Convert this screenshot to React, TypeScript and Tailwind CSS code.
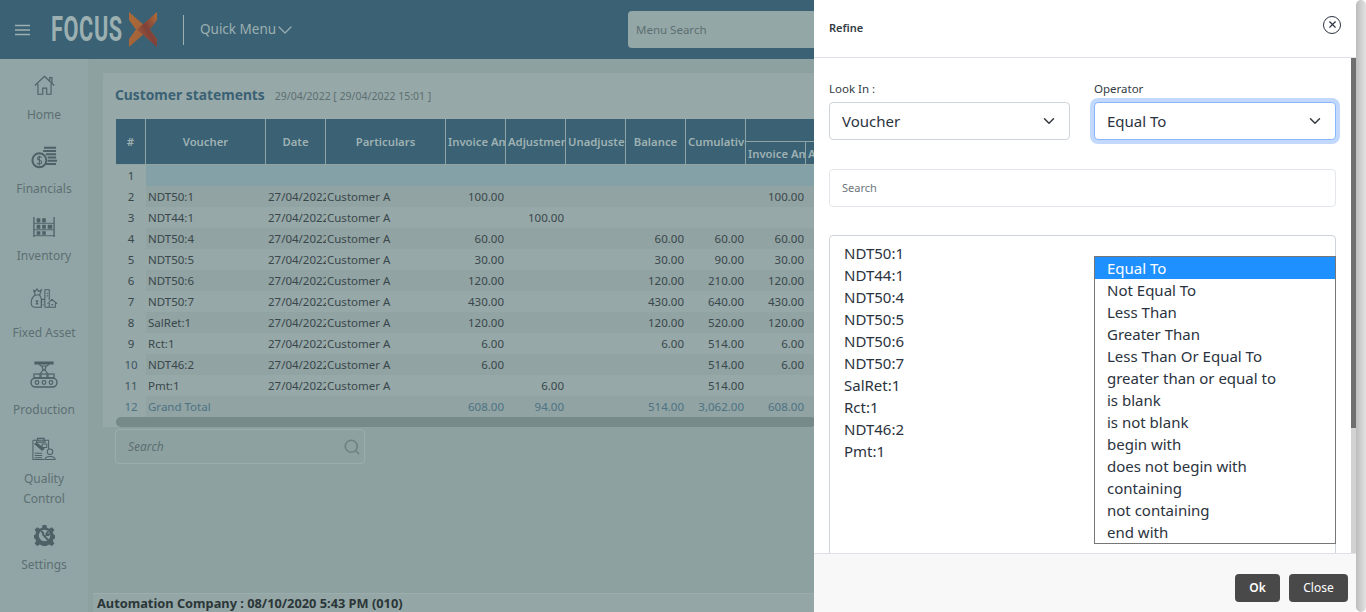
import React from "react";
import { ChevronDown, X, Search } from "lucide-react";

const stroke = "#4d6267";

const HomeIcon = () => (
  <svg width="23" height="21" viewBox="0 0 24 24" fill="none" stroke={stroke} strokeWidth="1.300">
    <path d="M1 12 L12 1.500 L23 12 M18 7 V3 h2.500 V9.500 M4.500 10 V22 H10 V15 H14.500 V22 H19.500 V10" />
  </svg>
);
const CoinsIcon = () => (
  <svg width="26" height="23" viewBox="0 0 28 24" fill="none">
    <circle cx="9" cy="15" r="7.500" stroke={stroke} strokeWidth="2.200" />
    <path d="M11.500 12 C10 10.500 6.500 11 7 13.500 C7.500 15.500 11.500 14.500 11.500 17 C11.500 19 8 19.500 6.500 18 M9 10 V20.500" stroke={stroke} strokeWidth="1.200" />
    <path d="M14 1.500 h13 M13 5 h14 M16 8.500 h11 M18 12 h9 M18 15.500 h10 M16 19 h11" stroke={stroke} strokeWidth="2.400" />
  </svg>
);
const ShelfIcon = () => (
  <svg width="22" height="22" viewBox="0 0 24 24" fill="none">
    <path d="M1 1 V23 M23 1 V23" stroke={stroke} strokeWidth="1.400" />
    <path d="M1 8 H23 M1 15 H23 M1 21.500 H23" stroke={stroke} strokeWidth="1" />
    <path d="M4 2.500 h4 v4.500 h-4z M10 2.500 h4 v4.500 h-4z M4 9.500 h4 v4.500 h-4z M10 9.500 h4 v4.500 h-4z M16 9.500 h5 v4.500 h-5z M4 16.500 h4 v4 h-4z M10 16.500 h4 v4 h-4z" fill={stroke} />
  </svg>
);
const AssetIcon = () => (
  <svg width="30" height="21" viewBox="0 0 30 24" fill="none" stroke={stroke} strokeWidth="1.200">
    <path d="M3 2 L5 4 L7 1 L9 4 L12 2 L10 8 H5 Z" />
    <path d="M5 8 C-1 12 -1 22 4 22 H12 V12 L10 8" />
    <path d="M7 14 v5 M5.500 15 h3 M5.500 18 h3" />
    <path d="M12 22 V13 H16 V22 M16 22 V2 H21 V14 M18 6 h1.500 M18 9 h1.500 M13.500 16 h1 M13.500 19 h1" />
    <path d="M19 18 L24 13 L30 18 M21 17 V22 H28 V17 M16 22 H28 M23.500 19 h2" />
  </svg>
);
const ProductionIcon = () => (
  <svg width="28" height="27" viewBox="0 0 28 27" fill="none" stroke={stroke} strokeWidth="1.200">
    <path d="M5 1 H23 V3 H5 Z" fill={stroke} />
    <path d="M9 3 L11 5 H17 L19 3 M12 5 L13 9 H15 L16 5" />
    <path d="M10 13 L13 9 H15 L18 13" />
    <rect x="4" y="13" width="6" height="4" /><rect x="11" y="13" width="6" height="4" /><rect x="18" y="13" width="6" height="4" />
    <rect x="1" y="17" width="26" height="9" rx="4.500" strokeWidth="1.400" />
    <circle cx="7" cy="21.500" r="1.800" /><circle cx="14" cy="21.500" r="1.800" /><circle cx="21" cy="21.500" r="1.800" />
  </svg>
);
const QualityIcon = () => (
  <svg width="24" height="24" viewBox="0 0 26 25" fill="none" stroke={stroke} strokeWidth="1.100">
    <path d="M1 3 H18 V13 M13 24 H1 V3" />
    <path d="M6 3 V1 H13 V3 M5 3 V5 H14 V3" strokeWidth="1.400" />
    <path d="M3 7 L11 14 L13 12 L5 6 Z" fill={stroke} />
    <path d="M11 7 H16 V11 H11 Z" />
    <path d="M3 17 H11 M3 19.500 H11 M3 22 H11" />
    <circle cx="19.500" cy="15.500" r="3" />
    <path d="M14 24 C14 19.500 25 19.500 25 24 Z" />
  </svg>
);
const GearIcon = () => (
  <svg width="21" height="21" viewBox="0 0 22 22">
    <path fillRule="evenodd" fill={stroke} d="M9 0 h4 l.6 3 2.400 1 2.600-1.700 2.800 2.800-1.700 2.600 1 2.400 3 .6 v3 l-3 .6-1 2.400 1.700 2.600-2.800 2.800-2.600-1.700-2.400 1-.6 2.800 h-4 l-.6-2.800-2.400-1-2.600 1.700-2.800-2.800 1.700-2.600-1-2.400-2.900-.6 v-3 l2.900-.6 1-2.400-1.700-2.600 2.800-2.800 2.600 1.700 2.400-1z M11 5 a6 6 0 1 0 .01 0z" />
    <path d="M7.500 6.500 L9.500 8 V10 L15 16 M15 7 L13 9 V10.500 H15 L16.500 9" stroke={stroke} strokeWidth="2" fill="none" />
  </svg>
);

const nav: { label: string[]; icon: React.ReactNode; h: string; gap: string }[] = [
  { label: ["Home"], icon: <HomeIcon />, h: "h-[72px]", gap: "mt-[6px]" },
  { label: ["Financials"], icon: <CoinsIcon />, h: "h-[69px]", gap: "mt-[8px]" },
  { label: ["Inventory"], icon: <ShelfIcon />, h: "h-[72px]", gap: "mt-[6px]" },
  { label: ["Fixed Asset"], icon: <AssetIcon />, h: "h-[76px]", gap: "mt-[11px]" },
  { label: ["Production"], icon: <ProductionIcon />, h: "h-[74px]", gap: "mt-[12px]" },
  { label: ["Quality", "Control"], icon: <QualityIcon />, h: "h-[87px]", gap: "mt-[7px]" },
  { label: ["Settings"], icon: <GearIcon />, h: "h-[60px]", gap: "mt-[6px]" },
];

const rows: (string | number)[][] = [
  [1, "", "", "", "", "", "", "", "", "", ""],
  [2, "NDT50:1", "27/04/2022", "Customer A", "100.00", "", "", "", "", "100.00"],
  [3, "NDT44:1", "27/04/2022", "Customer A", "", "100.00", "", "", "", ""],
  [4, "NDT50:4", "27/04/2022", "Customer A", "60.00", "", "", "60.00", "60.00", "60.00"],
  [5, "NDT50:5", "27/04/2022", "Customer A", "30.00", "", "", "30.00", "90.00", "30.00"],
  [6, "NDT50:6", "27/04/2022", "Customer A", "120.00", "", "", "120.00", "210.00", "120.00"],
  [7, "NDT50:7", "27/04/2022", "Customer A", "430.00", "", "", "430.00", "640.00", "430.00"],
  [8, "SalRet:1", "27/04/2022", "Customer A", "120.00", "", "", "120.00", "520.00", "120.00"],
  [9, "Rct:1", "27/04/2022", "Customer A", "6.00", "", "", "6.00", "514.00", "6.00"],
  [10, "NDT46:2", "27/04/2022", "Customer A", "6.00", "", "", "", "514.00", "6.00"],
  [11, "Pmt:1", "27/04/2022", "Customer A", "", "6.00", "", "", "514.00", ""],
  [12, "Grand Total", "", "", "608.00", "94.00", "", "514.00", "3,062.00", "608.00"],
];

const widths = [30, 120, 60, 120, 60, 60, 60, 60, 60, 60, 60];
const thc = "border-r border-b border-[#91a4a4] px-[2px] pt-[2px] overflow-hidden whitespace-nowrap text-center font-semibold text-[11.3px] text-[#9fb2b3]";

const voucherList = ["NDT50:1", "NDT44:1", "NDT50:4", "NDT50:5", "NDT50:6", "NDT50:7", "SalRet:1", "Rct:1", "NDT46:2", "Pmt:1"];
const operators = ["Equal To", "Not Equal To", "Less Than", "Greater Than", "Less Than Or Equal To", "greater than or equal to", "is blank", "is not blank", "begin with", "does not begin with", "containing", "not containing", "end with"];

const Select = ({ value, focus }: { value: string; focus?: boolean }) => (
  <div className={"h-[38px] rounded-[4px] border flex items-center justify-between pl-[12px] pr-[11px] bg-white text-[15px] text-[#2b3340] " + (focus ? "border-[#86b7fe] shadow-[0_0_0_4px_#c2d9fd]" : "border-[#ced4da]")}>
    <span className="pt-[1px]">{value}</span>
    <ChevronDown size={18} strokeWidth={2} className="text-[#343a40]" />
  </div>
);

export default function App() {
  return (
    <div className="relative w-[1366px] h-[612px] overflow-hidden flex flex-col bg-[#8ea1a1] font-['Noto_Sans','Open_Sans',sans-serif]">
      <header className="h-[59px] shrink-0 bg-[#3a6174] flex items-center text-[#9db0b1]">
        <svg width="16" height="12" viewBox="0 0 16 12" className="ml-[15px]" stroke="#9db0b1" strokeWidth="1.600">
          <path d="M0 1.500 H15 M0 6 H15 M0 10.500 H15" />
        </svg>
        <div className="ml-[20px] w-[71px] h-[30px] overflow-visible">
          <span className="block origin-top-left scale-x-[0.62] font-['Roboto',sans-serif] font-bold text-[35px] leading-[30px] tracking-[1px] text-[#9db0b1] whitespace-nowrap">FOCUS</span>
        </div>
        <svg width="28" height="35" viewBox="0 0 28 35" className="ml-[7px]">
          <defs>
            <linearGradient id="xa" x1="0" y1="0" x2="1" y2="1"><stop offset="0" stopColor="#aa6a38" /><stop offset="1" stopColor="#a0603a" /></linearGradient>
            <linearGradient id="xb" x1="1" y1="0" x2="0" y2="1"><stop offset="0" stopColor="#b06f38" /><stop offset="0.5" stopColor="#7f403a" /><stop offset="1" stopColor="#ad6d38" /></linearGradient>
          </defs>
          <polygon points="0,0 20,17.500 0,35 0,27 7,17.500 0,8" fill="url(#xa)" />
          <polygon points="28,0 8,17.500 28,35 28,27 21,17.500 28,8" fill="url(#xb)" />
        </svg>
        <div className="ml-[26px] w-px h-[30px] bg-[#9db0b1]" />
        <span className="ml-[16px] mb-[1px] w-[75px] whitespace-nowrap text-[13.5px] text-[#9db0b1]">Quick Menu</span>
        <ChevronDown size={24} strokeWidth={1.2} className="-ml-[3px] translate-x-[1px] text-[#9db0b1]" />
        <div className="ml-[332px] w-[200px] h-[37px] rounded-l-[4px] bg-[#94a7a7] flex items-center pl-[8px] text-[11.5px] text-[#5d6f72] shrink-0">Menu Search</div>
      </header>

      <div className="flex-1 flex min-h-0">
        <aside className="w-[89px] shrink-0 bg-[#91a5a6] flex flex-col border-r border-[#8da0a1] pt-[13px]">
          {nav.map((n) => (
            <div key={n.label[0]} className={"flex flex-col items-center " + n.h}>
              <div className="h-[27px] flex items-center justify-center">{n.icon}</div>
              <div className={"text-center text-[12px] leading-[20px] text-[#5d6f72] " + n.gap}>
                {n.label.map((l) => <div key={l}>{l}</div>)}
              </div>
            </div>
          ))}
        </aside>

        <main className="flex-1 min-w-0 flex flex-col">
          <div className="flex-1 pt-[14px] pl-[14px]">
            <div className="bg-[#96a8a8] w-[800px] h-[354px] pt-[11px] pl-[12px] relative">
              <div className="flex items-baseline h-[35px] leading-[22px] whitespace-nowrap">
                <span className="text-[13.8px] font-bold text-[#3a6174]">Customer statements</span>
                <span className="ml-[10px] text-[10.5px] text-[#5d6f72]">29/04/2022 [ 29/04/2022 15:01 ]</span>
              </div>
              <div className="w-[700px] ml-[1px] overflow-hidden">
                <table className="table-fixed border-separate border-spacing-0 w-[720px]">
                  <colgroup>
                    {widths.map((w, i) => <col key={i} style={{ width: w }} />)}
                  </colgroup>
                  <thead>
                    <tr className="bg-[#3a6174] h-[23px]">
                      {["#", "Voucher", "Date", "Particulars", "Invoice Amount", "Adjustment", "Unadjusted", "Balance", "Cumulative"].map((h) => (
                        <th key={h} rowSpan={2} className={thc}>{h}</th>
                      ))}
                      <th colSpan={2} className="border-b border-[#91a4a4]" />
                    </tr>
                    <tr className="bg-[#3a6174] h-[23px]">
                      <th className={thc}>Invoice Amount</th>
                      <th className={thc}>Adjustment</th>
                    </tr>
                  </thead>
                  <tbody>
                    {rows.map((r, i) => {
                      const last = i === rows.length - 1;
                      const bg = i === 0 ? "bg-[#85a1a8]" : i % 2 ? "bg-[#91a3a2]" : "bg-[#96a8a7]";
                      const txt = last ? "text-[#4d7284]" : "text-[#39474c]";
                      return (
                        <tr key={i} className="h-[21px]">
                          {widths.map((_, c) => {
                            const v = r[c] ?? "";
                            if (c === 0) return <td key={c} className={"bg-[#96a8a8] text-center text-[11.5px] p-0 " + (last ? "text-[#4d7284]" : i >= 9 ? "text-[#3f5560]" : "text-[#39474c]")}>{v}</td>;
                            const num = c >= 4;
                            return (
                              <td key={c} className={bg + " " + txt + " text-[11.5px] leading-[21px] overflow-hidden whitespace-nowrap p-0 " + (num ? "text-right pr-[2px]" : c === 3 ? "pl-[1px]" : "pl-[2px]")}>{v}</td>
                            );
                          })}
                        </tr>
                      );
                    })}
                  </tbody>
                </table>
                <div className="h-[10px] rounded-[5px] bg-[#768a8a]" />
              </div>
              <div className="absolute left-[12px] top-[356px] w-[250px] h-[35px] rounded-[4px] border border-[#9cadad] flex items-center justify-between pl-[12px] pr-[3px] italic text-[12px] text-[#5d6f72]">
                <span>Search</span>
                <Search size={18} strokeWidth={2.2} className="text-[#6f8283]" />
              </div>
            </div>
          </div>
          <div className="h-[19px] ml-[4px] pl-[4px] border-t border-[#9cadad] bg-[#94a6a6] text-[12.8px] leading-[18px] font-bold text-[#2b3638] whitespace-nowrap">Automation Company : 08/10/2020 5:43 PM (010)</div>
        </main>
      </div>

      <div className="absolute top-0 right-0 bottom-0 w-[552px] bg-white flex flex-col">
        <div className="absolute right-0 top-0 bottom-0 w-[10px] rounded-[5px] bg-gradient-to-r from-[#bdbdbd] to-[#e2e2e2]" />
        <div className="h-[58px] shrink-0 w-[542px] border-b border-[#dee2e6] flex items-center justify-between pl-[15px] pr-[15px]">
          <span className="text-[11px] font-semibold text-[#333b44]">Refine</span>
          <span className="w-[18px] h-[18px] mb-[8px] rounded-full border-[1.5px] border-[#2b3340] flex items-center justify-center">
            <X size={11} strokeWidth={2.5} className="text-[#2b3340]" />
          </span>
        </div>
        <div className="flex-1 min-h-0 relative w-[542px] pl-[15px] pr-[20px] pt-[22px] overflow-hidden">
          <div className="absolute right-0 top-0 bottom-0 w-[5px] bg-[#d2d2d2]"><div className="h-[370px] w-full bg-[#6f6f6f]" /></div>
          <div className="grid grid-cols-[241px_242px] gap-x-[24px]">
            <div>
              <div className="h-[22px] text-[11.5px] leading-[18px] text-[#333b44]">Look In :</div>
              <Select value="Voucher" />
            </div>
            <div>
              <div className="h-[22px] text-[11.5px] leading-[18px] text-[#333b44]">Operator</div>
              <Select value="Equal To" focus />
            </div>
          </div>
          <div className="mt-[29px] h-[38px] rounded-[4px] border border-[#e4e7eb] flex items-center pl-[12px] text-[11px] text-[#6c757d]">Search</div>
          <div className="mt-[28px] h-[330px] rounded-[4px] border border-[#ced4da] pl-[14px] pt-[6px] text-[15px] leading-[22px] text-[#2b3340]">
            {voucherList.map((v) => <div key={v}>{v}</div>)}
          </div>
          <div className="absolute left-[280px] top-[198px] w-[242px] h-[288px] border border-[#767676] bg-white text-[15px] leading-[22px] text-[#2b3340] overflow-hidden">
            {operators.map((o, i) => (
              <div key={o} className={"pl-[12px] whitespace-nowrap " + (i === 0 ? "bg-[#1e90ff] text-white" : "")}>{o}</div>
            ))}
          </div>
        </div>
        <div className="h-[59px] shrink-0 w-[542px] bg-[#f8f8f8] border-t border-[#dee2e6] flex items-start justify-end gap-[9px] pt-[20px] pr-[8px]">
          <div className="w-[45px] h-[28px] rounded-[4px] bg-[#494949] text-white text-[12px] font-semibold flex items-center justify-center">Ok</div>
          <div className="w-[59px] h-[28px] rounded-[4px] bg-[#494949] text-white text-[12px] flex items-center justify-center">Close</div>
        </div>
      </div>
    </div>
  );
}
